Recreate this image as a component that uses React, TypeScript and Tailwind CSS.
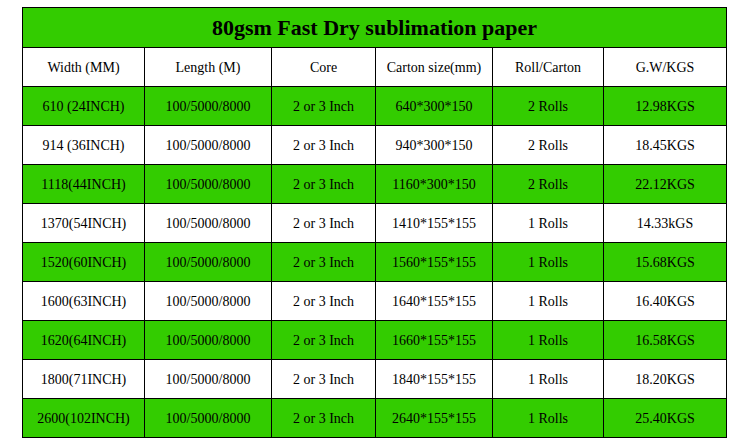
const rows = [
  ['610 (24INCH)', '100/5000/8000', '2 or 3 Inch', '640*300*150', '2 Rolls', '12.98KGS'],
  ['914 (36INCH)', '100/5000/8000', '2 or 3 Inch', '940*300*150', '2 Rolls', '18.45KGS'],
  ['1118(44INCH)', '100/5000/8000', '2 or 3 Inch', '1160*300*150', '2 Rolls', '22.12KGS'],
  ['1370(54INCH)', '100/5000/8000', '2 or 3 Inch', '1410*155*155', '1 Rolls', '14.33kGS'],
  ['1520(60INCH)', '100/5000/8000', '2 or 3 Inch', '1560*155*155', '1 Rolls', '15.68KGS'],
  ['1600(63INCH)', '100/5000/8000', '2 or 3 Inch', '1640*155*155', '1 Rolls', '16.40KGS'],
  ['1620(64INCH)', '100/5000/8000', '2 or 3 Inch', '1660*155*155', '1 Rolls', '16.58KGS'],
  ['1800(71INCH)', '100/5000/8000', '2 or 3 Inch', '1840*155*155', '1 Rolls', '18.20KGS'],
  ['2600(102INCH)', '100/5000/8000', '2 or 3 Inch', '2640*155*155', '1 Rolls', '25.40KGS'],
]

const headers = ['Width (MM)', 'Length (M)', 'Core', 'Carton size(mm)', 'Roll/Carton', 'G.W/KGS']
const widths = ['w-[122px]', 'w-[127px]', 'w-[104px]', 'w-[117px]', 'w-[111px]', 'w-[123px]']

export default function App() {
  return (
    <div className="w-[750px] h-[446px] bg-white pt-[7px] pl-[22px] text-black" style={{ fontFamily: '"Liberation Serif", "Times New Roman", serif' }}>
      <table className="table-fixed border-collapse w-[705px]">
        <colgroup>
          {widths.map((w, i) => (
            <col key={i} className={w} />
          ))}
        </colgroup>
        <tbody>
          <tr className="h-[40px] bg-[#33cc00]">
            <td colSpan={6} className="border border-black text-center text-[22px] font-bold">
              80gsm Fast Dry sublimation paper
            </td>
          </tr>
          <tr className="h-[39px] bg-white">
            {headers.map((h) => (
              <td key={h} className="border border-black text-center text-[14px]">{h}</td>
            ))}
          </tr>
          {rows.map((r, i) => (
            <tr key={i} className={`h-[39px] ${i % 2 === 0 ? 'bg-[#33cc00]' : 'bg-white'}`}>
              {r.map((c, j) => (
                <td key={j} className="border border-black text-center text-[14px]">{c}</td>
              ))}
            </tr>
          ))}
        </tbody>
      </table>
    </div>
  )
}
